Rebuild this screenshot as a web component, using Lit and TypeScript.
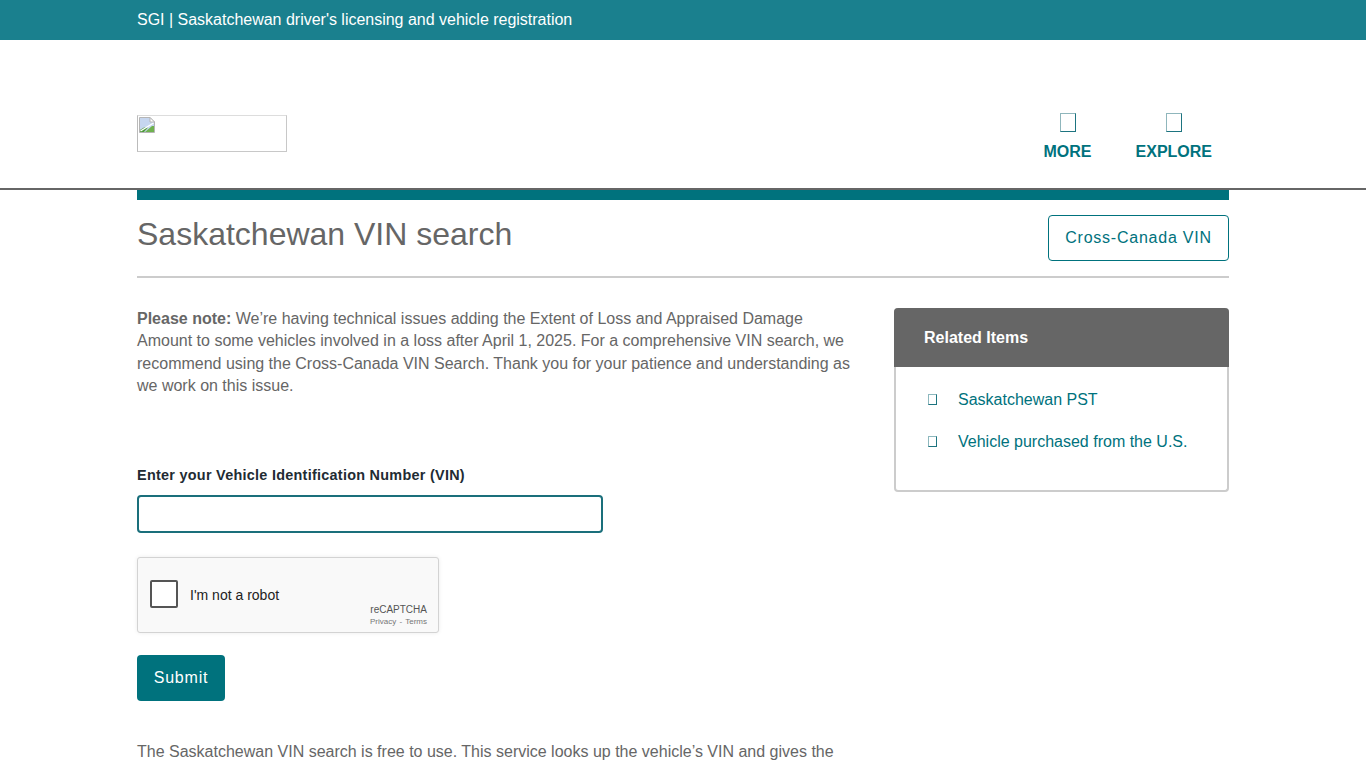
import { LitElement, html, css } from "lit";
import { customElement } from "lit/decorators.js";

@customElement("app-root")
export class AppRoot extends LitElement {
  static styles = css`
    :host { display: block; font-family: "Liberation Sans", Arial, sans-serif; color: #666; height: 768px; overflow: hidden; background: #fff; }
    * { box-sizing: border-box; }
    .top { height: 40px; background: #1a808e; color: #fff; font-size: 16px; line-height: 39px; padding-left: 137px; letter-spacing: -0.01px; }
    .head { height: 150px; border-bottom: 2px solid #666; padding: 0 137px; display: flex; align-items: flex-start; justify-content: space-between; }
    .logo { margin-top: 75px; width: 150px; height: 37px; border: 1px solid #c8c8c8; display: block; border-top-color: #ddd; border-left-color: #bbb; padding: 1px; }
    .logo svg { display: block; }
    .nav { display: flex; gap: 44px; margin-top: 73px; padding-right: 17px; }
    .nav-item { display: flex; flex-direction: column; align-items: center; color: #00727d; font-weight: 700; font-size: 16px; line-height: 20px; }
    .tofu { display: block; width: 16px; height: 19px; border: 1px solid #1d7480; border-left-color: #8fb6bc; border-top-color: #8fb6bc; margin-bottom: 10px; }
    .wrap { padding: 0 137px; }
    .bar { height: 10px; background: #00727d; }
    .title-row { height: 78px; border-bottom: 2px solid #ccc; display: flex; justify-content: space-between; align-items: flex-start; }
    h1 { margin: 15px 0 0; font-size: 32px; line-height: 38px; font-weight: 400; color: #666; }
    .cross { margin-top: 15px; height: 46px; width: 181px; border: 1px solid #00727d; border-radius: 4px; color: #00727d; font-size: 16px; letter-spacing: 0.76px; display: flex; align-items: center; justify-content: center; }
    .cols { display: flex; justify-content: space-between; align-items: flex-start; }
    .main { width: 720px; padding-top: 30px; }
    .note { margin: 0; font-size: 16px; line-height: 22.4px; color: #666; }
    label { display: block; margin-top: 67px; font-weight: 700; font-size: 14.4px; letter-spacing: 0.28px; line-height: 20px; color: #222b33; }
    .input { width: 466px; height: 38px; margin-top: 10px; border: 2px solid #1a6f7b; border-radius: 4px; background: #fff; display: block; padding: 0; }
    .captcha { margin-top: 24px; width: 302px; height: 76px; background: #f9f9f9; border: 1px solid #d3d3d3; border-radius: 3px; box-shadow: 0 0 4px rgba(0,0,0,0.08); display: flex; align-items: flex-start; position: relative; }
    .box { margin: 22px 0 0 12px; width: 28px; height: 28px; border: 2px solid #555; border-radius: 2px; background: #fff; }
    .robot { margin: 29px 0 0 12px; font-size: 14px; line-height: 17px; color: #222; }
    .brand { position: absolute; right: 11px; top: 46px; text-align: right; color: #555; }
    .brand div:first-child { font-size: 10px; line-height: 12px; }
    .brand div:last-child { font-size: 8px; line-height: 12px; color: #777; word-spacing: 1px; }
    .submit { display: block; margin-top: 22px; width: 88px; height: 46px; background: #00727d; color: #fff; border: 0; border-radius: 4px; font: 16px "Liberation Sans", Arial, sans-serif; letter-spacing: 0.8px; padding: 0; }
    .tail { margin: 40px 0 0; font-size: 16px; line-height: 22.4px; color: #666; }
    .side { width: 335px; margin-top: 30px; border: 2px solid #ccc; border-top: 0; border-radius: 4px; height: 184px; }
    .side-head { height: 59px; margin: 0 -2px; background: #666; color: #fff; font-weight: 700; font-size: 16px; line-height: 59px; padding-left: 30px; border-radius: 4px 4px 0 0; }
    ul { list-style: none; margin: 0; padding: 22px 0 0 32px; }
    li { display: flex; align-items: center; color: #00727d; font-size: 16px; line-height: 22px; margin-bottom: 20px; }
    .tofu-s { display: block; width: 9px; height: 11px; border: 1px solid #1d7480; border-left-color: #8db8be; border-top-color: #8db8be; margin-right: 21px; flex: none; position: relative; top: -1px; }
  `;

  render() {
    return html`
      <div class="top">SGI | Saskatchewan driver's licensing and vehicle registration</div>
      <header class="head">
        <div class="logo">
          <svg width="16" height="16" viewBox="0 0 16 16">
            <path d="M0.5 0.5H11L15.5 5V15.5H0.5Z" fill="#c6d6ef" stroke="#b5b5b5"/>
            <path d="M11 0.5V5H15.5Z" fill="#fff" stroke="#b5b5b5"/>
            <path d="M1 15V13L5 10.5H9L5 15Z" fill="#4f9a3a"/>
            <path d="M6 15L13 9H15V15Z" fill="#6fb24f"/>
            <path d="M1.5 14L14.5 6" stroke="#fff" stroke-width="1.4"/>
          </svg>
        </div>
        <nav class="nav">
          <div class="nav-item"><span class="tofu"></span>MORE</div>
          <div class="nav-item"><span class="tofu"></span>EXPLORE</div>
        </nav>
      </header>
      <div class="wrap">
        <div class="bar"></div>
        <div class="title-row">
          <h1>Saskatchewan VIN search</h1>
          <div class="cross">Cross-Canada VIN</div>
        </div>
        <div class="cols">
          <main class="main">
            <p class="note"><b>Please note:</b> We’re having technical issues adding the Extent of Loss and Appraised Damage<br>Amount to some vehicles involved in a loss after April 1, 2025. For a comprehensive VIN search, we<br>recommend using the Cross-Canada VIN Search. Thank you for your patience and understanding as<br>we work on this issue.</p>
            <label>Enter your Vehicle Identification Number (VIN)</label>
            <input class="input" type="text" />
            <div class="captcha">
              <div class="box"></div>
              <div class="robot">I'm not a robot</div>
              <div class="brand"><div>reCAPTCHA</div><div>Privacy - Terms</div></div>
            </div>
            <button class="submit">Submit</button>
            <p class="tail">The Saskatchewan VIN search is free to use. This service looks up the vehicle’s VIN and gives the</p>
          </main>
          <aside class="side">
            <div class="side-head">Related Items</div>
            <ul>
              <li><span class="tofu-s"></span>Saskatchewan PST</li>
              <li><span class="tofu-s"></span>Vehicle purchased from the U.S.</li>
            </ul>
          </aside>
        </div>
      </div>
    `;
  }
}
